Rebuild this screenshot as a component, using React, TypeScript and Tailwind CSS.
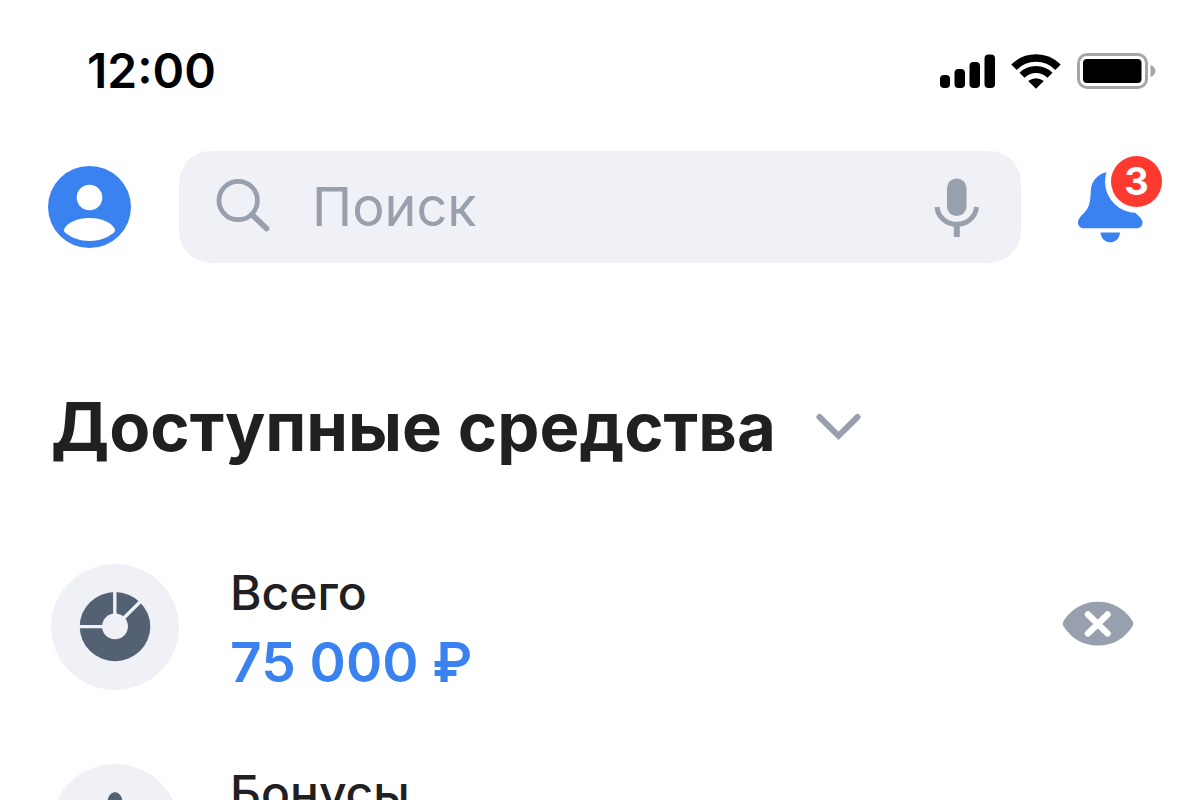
import { useState } from 'react';
import type { ReactNode } from 'react';

type Account = {
	id: string;
	title: string;
	amount: string;
	icon: ReactNode;
};

const SignalIcon = () => (
	<svg width="56" height="34" viewBox="0 0 56 34" fill="#000" aria-hidden="true">
		<rect x="1" y="21" width="10" height="13" rx="4" />
		<rect x="15.5" y="15" width="10.5" height="19" rx="4" />
		<rect x="30.5" y="8" width="10.5" height="26" rx="4" />
		<rect x="45.5" y="0.5" width="10.5" height="33.5" rx="4" />
	</svg>
);

const WifiIcon = () => (
	<svg width="50" height="35" viewBox="0 0 50 35" aria-hidden="true">
		<path d="M3 13.2 A31 31 0 0 1 47 13.2" fill="none" stroke="#000" strokeWidth="7.6" />
		<path d="M11 21.2 A20 20 0 0 1 39 21.2" fill="none" stroke="#000" strokeWidth="7.2" />
		<path d="M17.2 27 Q25 21.6 32.8 27 L25 34.8 Z" fill="#000" />
	</svg>
);

const BatteryIcon = () => (
	<svg width="79" height="36" viewBox="0 0 79 36" aria-hidden="true">
		<rect x="1.5" y="1.5" width="68" height="33" rx="8.5" fill="none" stroke="#a6a6a6" strokeWidth="3" />
		<rect x="6" y="6" width="58.5" height="24" rx="4" fill="#000" />
		<path d="M73.5 12 Q78.5 14 78.5 18 Q78.5 22 73.5 24 Z" fill="#a6a6a6" />
	</svg>
);

const AvatarIcon = () => (
	<svg width="84" height="82" viewBox="0 0 84 82" aria-hidden="true">
		<ellipse cx="41.5" cy="41" rx="41.5" ry="41" fill="#3b82f1" />
		<circle cx="41.5" cy="31.5" r="12.8" fill="#fff" />
		<path
			d="M16 63.5 C19 56.5 29.5 52 41.5 52 C53.5 52 64 56.5 67 63.5 C67.5 65 66 66.5 65 67.3 C58.5 72.5 50 75 41.5 75 C33 75 24.5 72.5 18 67.3 C17 66.5 15.5 65 16 63.5 Z"
			fill="#fff"
		/>
	</svg>
);

const SearchIcon = () => (
	<svg width="54" height="56" viewBox="0 0 54 56" fill="none" stroke="#99a0ad" aria-hidden="true">
		<circle cx="22.2" cy="21.5" r="19.2" strokeWidth="4.8" />
		<path d="M37 36.5 L50.5 49.5" strokeWidth="5.8" strokeLinecap="round" />
	</svg>
);

const MicIcon = () => (
	<svg width="46" height="60" viewBox="0 0 46 60" aria-hidden="true">
		<rect x="13" y="1.5" width="19.5" height="37.5" rx="9.75" fill="#99a0ad" />
		<path d="M3 30 A19.8 18.6 0 0 0 42.5 30" fill="none" stroke="#99a0ad" strokeWidth="5" />
		<path d="M22.8 48 V60" stroke="#99a0ad" strokeWidth="6" />
	</svg>
);

const BellIcon = () => (
	<svg width="65" height="72" viewBox="0 0 65 72" fill="#3b82f1" aria-hidden="true">
		<path d="M32.5 0.5 C20 1.5 13 10 12.8 20 C12.2 28 12.6 35 6.5 41.5 C3 45 0 48 0 51.5 C0 54.6 2.4 57.2 5.5 57.2 H59 C62.2 57.2 64.5 54.6 64.5 51.5 C64.5 48 61.5 46 58.5 43 C53.5 37 53.5 33 52.8 21 C52.5 9 45 0.5 32.5 0.5 Z" />
		<path d="M22.5 61.5 H42 C41.5 67.6 37.5 71.3 32.3 71.3 C27 71.3 23 67.6 22.5 61.5 Z" />
	</svg>
);

const ChevronIcon = () => (
	<svg width="46" height="28" viewBox="0 0 46 28" fill="none" aria-hidden="true">
		<path d="M3.5 4 L22.5 22.8 L41.5 4" stroke="#99a0ad" strokeWidth="6" strokeLinecap="round" />
	</svg>
);

const PieIcon = () => (
	<svg width="72" height="70" viewBox="0 0 72 70" aria-hidden="true">
		<ellipse cx="36" cy="34.6" rx="35.3" ry="34.6" fill="#536173" />
		<path d="M35.8 0 V35 M0 34.6 H36 M36 34.6 L63 8" stroke="#f0f1f6" strokeWidth="3.4" />
		<circle cx="36" cy="34.4" r="12.9" fill="#f0f1f6" />
	</svg>
);

const StarIcon = () => (
	<svg width="72" height="70" viewBox="0 0 72 70" fill="#536173" aria-hidden="true">
		<path d="M29 7 C31 -2 41 -2 43 7 L48 21 H66 C72 21 73 26 69 29 L55 40 L61 60 C62 66 57 68 53 65 L36 53 L18 65 C14 68 9 66 10 60 L16 40 L2 29 C-2 26 -1 21 5 21 H24 Z" />
	</svg>
);

const HideIcon = () => (
	<svg width="72" height="46" viewBox="0 0 72 46" aria-hidden="true">
		<path
			d="M1.5 20 C9 8 21 0.7 36 0.7 C51 0.7 63 8 70.5 20 Q72 22.6 70.5 25.2 C63 37.2 51 44.6 36 44.6 C21 44.6 9 37.2 1.5 25.2 Q0 22.6 1.5 20 Z"
			fill="#99a0ad"
		/>
		<path d="M26 13.5 L45.5 32.5 M45.5 13.5 L26 32.5" stroke="#fff" strokeWidth="6.4" strokeLinecap="round" />
	</svg>
);

const accounts: Account[] = [
	{ id: 'total', title: 'Всего', amount: '75 000 ₽', icon: <PieIcon /> },
	{ id: 'bonus', title: 'Бонусы', amount: '', icon: <StarIcon /> },
];

const App = () => {
	const [search, setSearch] = useState('');
	const [open, setOpen] = useState(true);
	const [hidden, setHidden] = useState(false);

	return (
		<div className="h-screen overflow-hidden bg-white font-['Inter','Noto_Sans',sans-serif] text-[#202022]">
			{/* Status bar */}
			<div className="flex items-center justify-between pt-[35px] pr-11 pl-[87px]">
				<span className="text-[48px] leading-[72px] font-semibold text-black">12:00</span>
				<div className="flex items-center gap-4">
					<SignalIcon />
					<WifiIcon />
					<BatteryIcon />
				</div>
			</div>

			<header className="flex items-center pt-11 pr-[38px] pl-12">
				<button type="button" aria-label="Профиль" className="mr-[47px] shrink-0 cursor-pointer">
					<AvatarIcon />
				</button>
				<label className="flex h-28 min-w-0 flex-1 items-center rounded-[32px] bg-[#f0f1f6] pr-[41px] pl-[37px]">
					<SearchIcon />
					<input
						type="text"
						value={search}
						onChange={(e) => setSearch(e.target.value)}
						placeholder="Поиск"
						aria-label="Поиск"
						className="ml-[42px] min-w-0 flex-1 text-[54px] leading-[72px] outline-none placeholder:text-[#99a0ad]"
					/>
					<button type="button" aria-label="Голосовой поиск" className="cursor-pointer">
						<MicIcon />
					</button>
				</label>
				<button
					type="button"
					aria-label="Уведомления"
					className="relative ml-[57px] w-[84px] shrink-0 cursor-pointer"
				>
					<BellIcon />
					<span className="absolute -top-[15px] right-0 flex size-[51px] items-center justify-center rounded-full bg-[#fd3a2f] text-[38px] leading-[51px] font-bold text-white ring-[6px] ring-white">
						3
					</span>
				</button>
			</header>

			<main className="pr-[66px] pl-[51px]">
				<h1 className="pt-[120px] text-[67px] leading-[88px] font-bold">
					<button
						type="button"
						aria-expanded={open}
						onClick={() => setOpen(!open)}
						className="flex cursor-pointer items-center gap-10"
					>
						Доступные средства
						<ChevronIcon />
					</button>
				</h1>

				{open && (
					<ul className="flex flex-col gap-[74px] pt-[93px]">
						{accounts.map((account) => (
							<li key={account.id} className="flex items-center">
								<div className="mr-[51px] flex h-[126px] w-32 shrink-0 items-center justify-center rounded-[50%] bg-[#f0f1f6]">
									{account.icon}
								</div>
								<div className="flex h-[126px] min-w-0 flex-1 flex-col">
									<span className="text-[48px] leading-[58px] font-medium">{account.title}</span>
									<span className="text-[55px] leading-[80px] font-semibold text-[#3b82f1]">
										{hidden ? '•••' : account.amount}
									</span>
								</div>
								<button
									type="button"
									aria-label="Скрыть сумму"
									onClick={() => setHidden(!hidden)}
									className="cursor-pointer pb-1.5"
								>
									<HideIcon />
								</button>
							</li>
						))}
					</ul>
				)}
			</main>
		</div>
	);
};

export default App;
